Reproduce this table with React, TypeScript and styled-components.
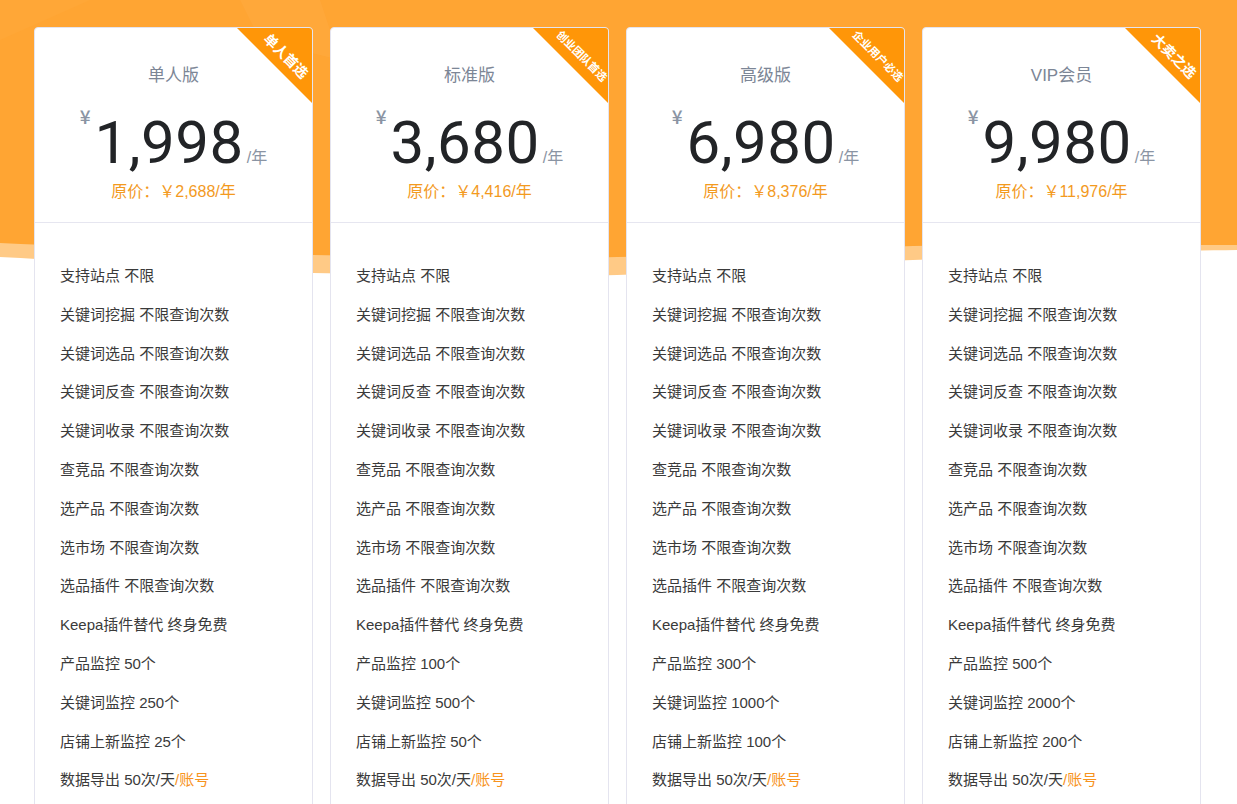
import React from "react";
import styled, { createGlobalStyle } from "styled-components";

const Global = createGlobalStyle`
  html, body { margin: 0; padding: 0; background: #fff; }
  body { font-family: "Liberation Sans", "Noto Sans CJK SC", Arial, sans-serif; }
  * { box-sizing: border-box; }
`;

const Page = styled.div`
  position: relative;
  width: 1237px;
  min-height: 804px;
  overflow: hidden;
  background: #fff;
`;

const Backdrop = styled.svg`
  position: absolute;
  top: 0;
  left: 0;
  width: 1237px;
  height: 290px;
  z-index: 0;
`;

const Grid = styled.div`
  position: relative;
  z-index: 1;
  display: grid;
  grid-template-columns: repeat(4, 279px);
  column-gap: 17px;
  padding: 27px 36px 0 34px;
`;

const Card = styled.div`
  position: relative;
  background: #fff;
  border: 1px solid #e4e4ef;
  border-radius: 4px;
  overflow: hidden;
`;

const Header = styled.div`
  display: flex;
  flex-direction: column;
  align-items: center;
  height: 195px;
  padding-top: 36px;
  border-bottom: 1px solid #e6e6f0;
`;

const Title = styled.div`
  font-size: 17px;
  line-height: 24px;
  color: #7c8696;
`;

const PriceRow = styled.div`
  display: flex;
  align-items: baseline;
  margin-top: 25px;
  height: 60px;
`;

const Yen = styled.span`
  align-self: flex-start;
  font-family: "Noto Sans CJK SC", sans-serif;
  font-size: 19px;
  font-weight: 500;
  line-height: 18px;
  color: #8a94a3;
  margin-top: -6px;
  margin-right: 4px;
`;

const Amount = styled.span`
  font-family: Roboto, "Liberation Sans", sans-serif;
  font-size: 60px;
  line-height: 60px;
  font-weight: 400;
  letter-spacing: 0.5px;
  color: #222427;
`;

const Unit = styled.span`
  font-size: 16px;
  color: #8a94a3;
  margin-left: 3px;
`;

const Original = styled.div`
  margin-top: 8px;
  font-size: 16px;
  line-height: 22px;
  color: #f39a1e;
`;

const Corner = styled.div`
  position: absolute;
  top: 0;
  right: 0;
  width: 75px;
  height: 75px;
  background: #ff9608;
  clip-path: polygon(0 0, 100% 0, 100% 100%);
`;

const CornerText = styled.span<{ $small?: boolean }>`
  position: absolute;
  left: 49px;
  top: 28px;
  transform: translate(-50%, -50%) rotate(45deg);
  white-space: nowrap;
  color: #fff;
  font-weight: 700;
  font-size: ${(p) => (p.$small ? "11px" : "14px")};
  line-height: 16px;
`;

const List = styled.ul`
  list-style: none;
  margin: 0;
  padding: 34px 0 40px 25px;
`;

const Item = styled.li`
  font-size: 15px;
  line-height: 38.8px;
  color: #3a3a3a;
  white-space: nowrap;
`;

const Accent = styled.span`
  color: #f7931e;
`;

type Plan = {
  name: string;
  tag: string;
  price: string;
  original: string;
  products: string;
  keywords: string;
  stores: string;
};

const plans: Plan[] = [
  { name: "单人版", tag: "单人首选", price: "1,998", original: "2,688", products: "50", keywords: "250", stores: "25" },
  { name: "标准版", tag: "创业团队首选", price: "3,680", original: "4,416", products: "100", keywords: "500", stores: "50" },
  { name: "高级版", tag: "企业用户必选", price: "6,980", original: "8,376", products: "300", keywords: "1000", stores: "100" },
  { name: "VIP会员", tag: "大卖之选", price: "9,980", original: "11,976", products: "500", keywords: "2000", stores: "200" },
];

const common = [
  "支持站点 不限",
  "关键词挖掘 不限查询次数",
  "关键词选品 不限查询次数",
  "关键词反查 不限查询次数",
  "关键词收录 不限查询次数",
  "查竞品 不限查询次数",
  "选产品 不限查询次数",
  "选市场 不限查询次数",
  "选品插件 不限查询次数",
  "Keepa插件替代 终身免费",
];

export default function App() {
  return (
    <Page>
      <Global />
      <Backdrop viewBox="0 0 1237 290" preserveAspectRatio="none">
        <path
          d="M0 0 H1237 V250 C1150 251 1050 255 913 260 C850 263 750 270 617 275 C550 276 450 276 313 273 C250 271 150 265 0 257 Z"
          fill="#ffca86"
        />
        <path
          d="M0 0 H1237 V245 C1150 245 1050 244 913 246 C850 248 750 255 617 257 C550 258 450 258 313 255 C250 254 150 250 0 243 Z"
          fill="#ffa533"
        />
        <path d="M240 0 H320 L340 60 L260 40 Z" fill="#ffb048" opacity="0.35" />
        <path d="M0 40 L90 0 H0 Z" fill="#ffad42" opacity="0.3" />
      </Backdrop>
      <Grid>
        {plans.map((p) => (
          <Card key={p.name}>
            <Corner>
              <CornerText $small={p.tag.length > 4}>{p.tag}</CornerText>
            </Corner>
            <Header>
              <Title>{p.name}</Title>
              <PriceRow>
                <Yen>¥</Yen>
                <Amount>{p.price}</Amount>
                <Unit>/年</Unit>
              </PriceRow>
              <Original>原价：￥{p.original}/年</Original>
            </Header>
            <List>
              {common.map((c) => (
                <Item key={c}>{c}</Item>
              ))}
              <Item>产品监控 {p.products}个</Item>
              <Item>关键词监控 {p.keywords}个</Item>
              <Item>店铺上新监控 {p.stores}个</Item>
              <Item>
                数据导出 50次/天<Accent>/账号</Accent>
              </Item>
            </List>
          </Card>
        ))}
      </Grid>
    </Page>
  );
}
